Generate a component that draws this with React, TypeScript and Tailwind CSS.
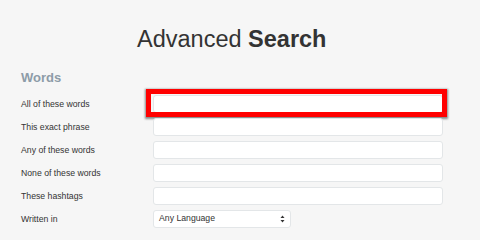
const rows = [
  "All of these words",
  "This exact phrase",
  "Any of these words",
  "None of these words",
  "These hashtags",
];

export default function App() {
  return (
    <div className="h-[240px] w-[480px] overflow-hidden bg-[#f6f6f6] font-['Liberation_Sans',Arial,sans-serif] text-[#333]">
      <h1 className="pl-[137px] pt-[25px] text-[23.5px] leading-[28px] text-[#333]">
        <span className="font-light">Advanced</span> <span className="font-bold">Search</span>
      </h1>

      <h2 className="mt-[17px] pl-[21px] text-[13px] font-bold leading-[16px] text-[#8d9ca8]">
        Words
      </h2>

      <div className="mt-[9px] flex flex-col gap-[5px] pl-[21px]">
        {rows.map((label, i) => (
          <div key={label} className="flex items-center">
            <label className="w-[132px] text-[8.7px] leading-[12px] text-[#333]">{label}</label>
            <div className="relative">
              <input
                type="text"
                className="block h-[18px] w-[290px] rounded-[3px] border border-[#e3e6e8] bg-white"
              />
              {i === 0 && (
                <div className="pointer-events-none absolute -top-[6px] -bottom-[4px] -left-[7px] -right-[4px] border-[5px] border-[#ff0000] shadow-[0_1px_2px_1px_rgba(0,0,0,0.45)]" />
              )}
            </div>
          </div>
        ))}
        <div className="flex items-center">
          <label className="w-[132px] text-[8.7px] leading-[12px] text-[#333]">Written in</label>
          <div className="flex h-[18px] w-[138px] items-center justify-between rounded-[3px] border border-[#e3e6e8] bg-white pl-[5px] pr-[5px] text-[8.7px]">
            <span>Any Language</span>
            <svg width="5" height="8" viewBox="0 0 5 8">
              <path d="M2.5 0.5 L4.5 3 L0.5 3 Z" fill="#333" />
              <path d="M2.5 7.5 L4.5 5 L0.5 5 Z" fill="#333" />
            </svg>
          </div>
        </div>
      </div>
    </div>
  );
}
